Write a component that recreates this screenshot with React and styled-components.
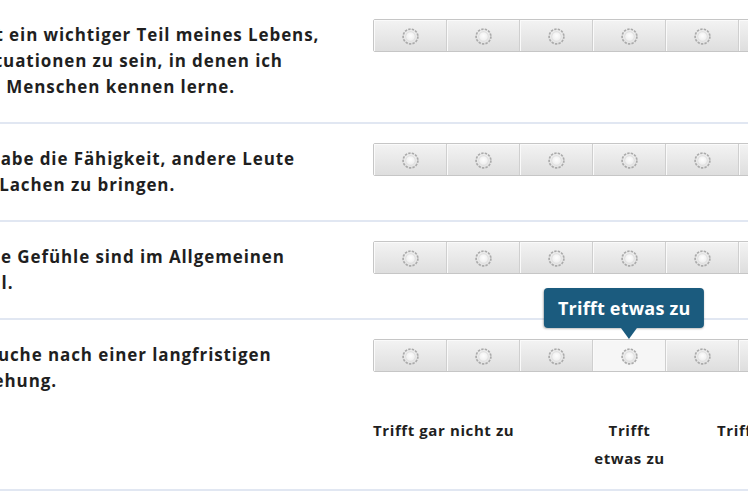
import React from 'react';
import styled, { createGlobalStyle } from 'styled-components';

const GlobalStyle = createGlobalStyle`
  html, body {
    margin: 0;
    padding: 0;
    background: #fff;
    overflow: hidden;
  }
  body {
    font-family: "Open Sans", "DejaVu Sans", sans-serif;
    color: #1f1f1f;
  }
`;

const Survey = styled.div`
  margin-left: -45px;
  width: 960px;
`;

const Row = styled.div`
  display: flex;
  align-items: flex-start;
  padding: 22px 0;
  border-bottom: ${props => props.last ? 'none' : '2px solid #e1e7f2'};
`;

const Question = styled.div`
  width: 370px;
  flex: none;
  font-size: 17px;
  font-weight: 700;
  line-height: 26px;
  letter-spacing: 0.9px;
  color: #1f1f1f;
`;

const Scale = styled.div`
  display: flex;
  margin-left: 48px;
  margin-top: -3px;
  border: 1px solid #c6c6c6;
  border-radius: 2px;
`;

const Cell = styled.div`
  position: relative;
  width: 72px;
  height: 29px;
  display: flex;
  align-items: center;
  justify-content: center;
  padding-top: 2px;
  box-sizing: content-box;
  border-left: 1px solid #cfcfcf;
  box-shadow: inset 1px 1px 0 #fafafa;
  background: ${props => props.active
    ? '#f6f6f6'
    : 'linear-gradient(#f3f3f3, #dedede)'};
  &:first-child {
    border-left: none;
  }
`;

const Tooltip = styled.div`
  position: absolute;
  bottom: calc(100% + 12px);
  left: 50%;
  transform: translateX(-53%);
  white-space: nowrap;
  background: #1b5b7e;
  color: #fff;
  font-size: 18px;
  font-weight: 700;
  line-height: 40px;
  padding: 0 14px;
  border-radius: 4px;
  box-shadow: 0 1px 2px rgba(0, 0, 0, .25);
  letter-spacing: 0.2px;

  &::after {
    content: '';
    position: absolute;
    top: 100%;
    left: calc(53% - 8px);
    border-left: 8px solid transparent;
    border-right: 8px solid transparent;
    border-top: 11px solid #1b5b7e;
  }
`;

const LegendRow = styled.div`
  display: flex;
  padding: 0 0 17px;
  border-bottom: 2px solid #e1e7f2;
`;

const Spacer = styled.div`
  width: 418px;
  flex: none;
`;

const Labels = styled.div`
  display: grid;
  grid-template-columns: 1fr 73px 1fr;
  width: 513px;
  font-size: 15px;
  font-weight: 700;
  line-height: 28px;
  letter-spacing: 0.6px;
  color: #1f1f1f;
`;

const Label = styled.div`
  text-align: ${props => props.align};
  white-space: ${props => props.align === 'center' ? 'normal' : 'nowrap'};
`;

const Dot = () =>
  <svg width="19" height="19" viewBox="0 0 18 18">
    <defs>
      <radialGradient id="dotFill" cx="50%" cy="45%" r="55%">
        <stop offset="0%" stopColor="#fdfdfd" />
        <stop offset="70%" stopColor="#ececec" />
        <stop offset="100%" stopColor="#d9d9d9" />
      </radialGradient>
    </defs>
    <circle cx="9" cy="9" r="7" fill="url(#dotFill)" stroke="#aaaaaa" strokeWidth="1.6" strokeDasharray="2.2 1.2" />
    <circle cx="9" cy="9" r="4.6" fill="none" stroke="#e0e0e0" strokeWidth="1" />
  </svg>;

const questions = [
  'Es ist ein wichtiger Teil meines Lebens, in Situationen zu sein, in denen ich neue Menschen kennen lerne.',
  'Ich habe die Fähigkeit, andere Leute zum Lachen zu bringen.',
  'Meine Gefühle sind im Allgemeinen stabil.',
  'Ich suche nach einer langfristigen Beziehung.'
];

const RatingScale = ({ hovered }) =>
  <Scale>
    {[0, 1, 2, 3, 4, 5, 6].map(i =>
      <Cell key={i} active={i === hovered}>
        {i === hovered && <Tooltip>Trifft etwas zu</Tooltip>}
        <Dot />
      </Cell>
    )}
  </Scale>;

const App = () =>
  <>
    <GlobalStyle />
    <Survey>
      {questions.map((q, i) =>
        <Row key={i} last={i === questions.length - 1}>
          <Question>{q}</Question>
          <RatingScale hovered={i === questions.length - 1 ? 3 : -1} />
        </Row>
      )}
      <LegendRow>
        <Spacer />
        <Labels>
          <Label align="left">Trifft gar nicht zu</Label>
          <Label align="center">Trifft etwas zu</Label>
          <Label align="right">Trifft vollkommen zu</Label>
        </Labels>
      </LegendRow>
    </Survey>
  </>;

export default App;
